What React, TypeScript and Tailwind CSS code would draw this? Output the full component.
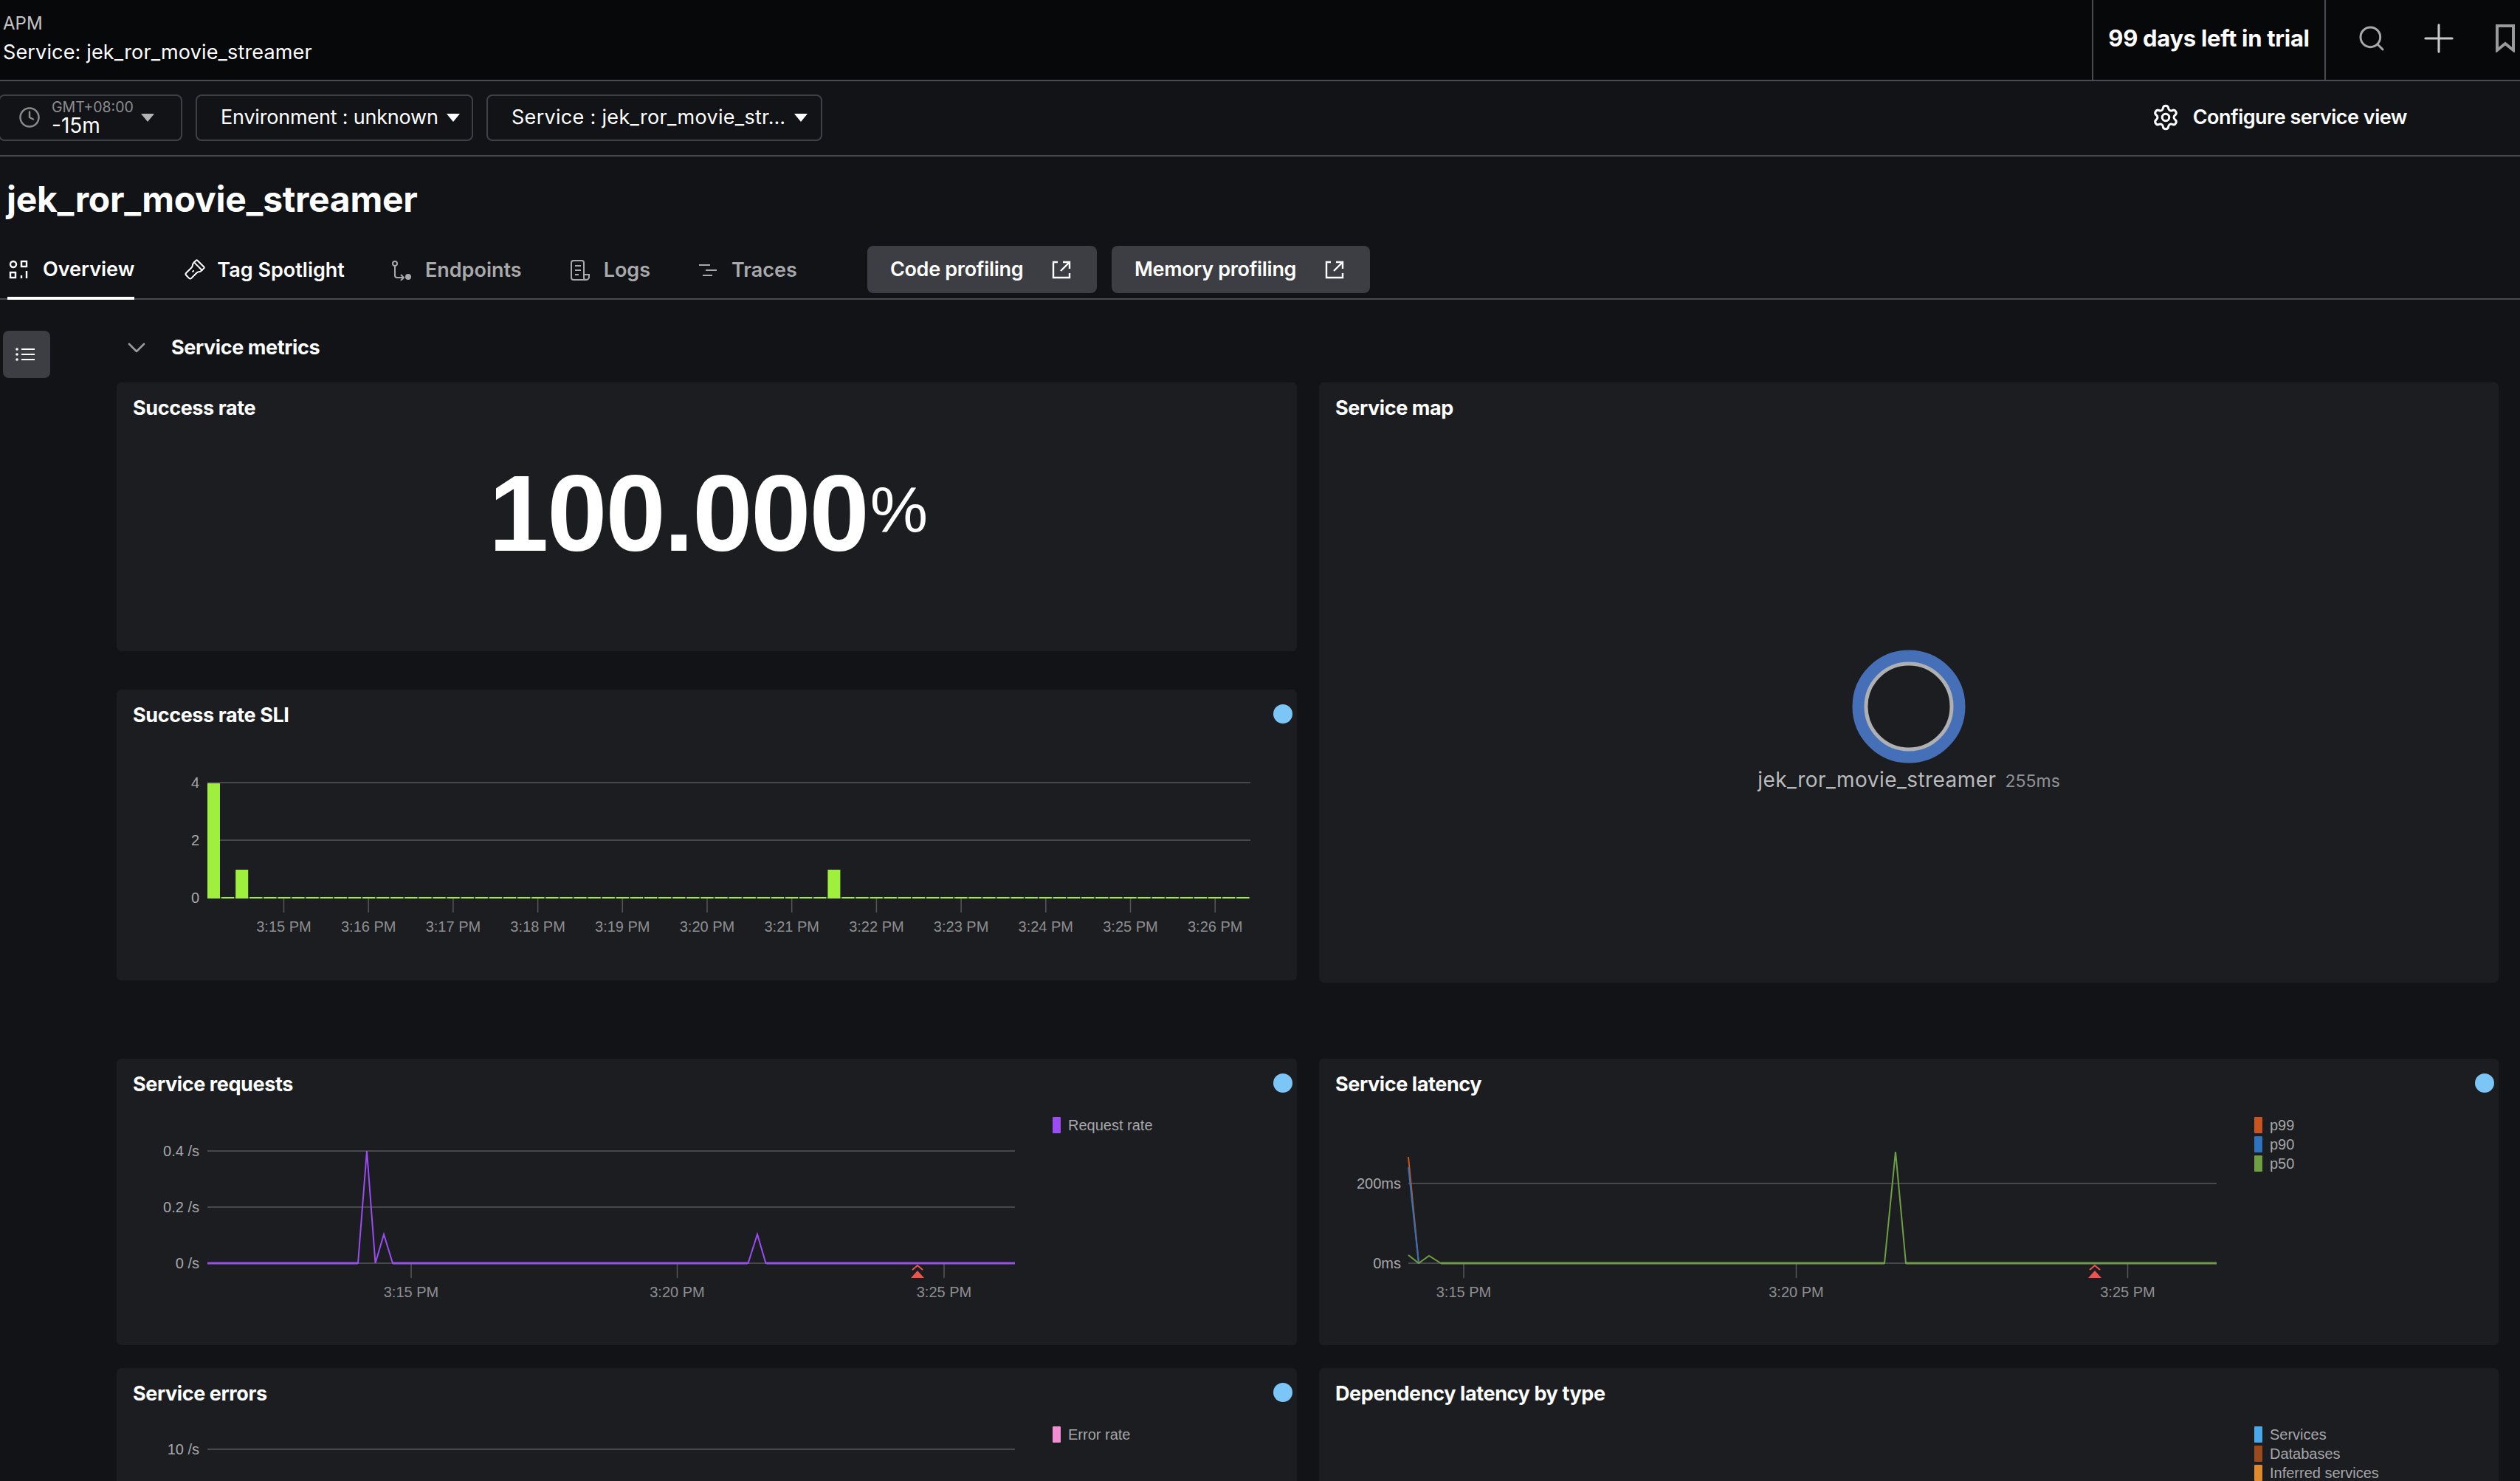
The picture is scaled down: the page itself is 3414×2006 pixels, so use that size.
import React from 'react';
import { ChevronDown, Clock, Flashlight, Plus, Search, Settings } from 'lucide-react';

const Caret = ({ color = '#ffffff' }: { color?: string }) => (
  <svg width="18" height="11" viewBox="0 0 18 11" className="shrink-0">
    <polygon points="0,0 18,0 9,11" fill={color} />
  </svg>
);

const OverviewIcon = () => (
  <svg width="26" height="26" viewBox="0 0 26 26" fill="none" stroke="#fff" strokeWidth="2.4">
    <circle cx="6" cy="6" r="4" />
    <rect x="17" y="2" width="7" height="7" />
    <rect x="2" y="17" width="7" height="7" />
    <path d="M17 21v4M24 15v10" />
  </svg>
);

const EndpointsIcon = () => (
  <svg width="28" height="28" viewBox="0 0 28 28" fill="none" stroke="#a9a9ab" strokeWidth="2">
    <circle cx="5" cy="5" r="3" />
    <path d="M5 8v13q0 3 3 3h8M13 20l4 4-4 4" />
    <circle cx="23" cy="23" r="4" fill="#a9a9ab" stroke="none" />
  </svg>
);

const LogsIcon = () => (
  <svg width="28" height="28" viewBox="0 0 28 28" fill="none" stroke="#a9a9ab" strokeWidth="2">
    <path d="M21 27H5q-3 0-3-3V4q0-3 3-3h11q3 0 3 3v20q0 3 3 3t4-3v-4h-7" />
    <path d="M7 8h8M7 14h8M7 20h5" />
  </svg>
);

const TracesIcon = () => (
  <svg width="26" height="24" viewBox="0 0 26 24" fill="none" stroke="#a9a9ab" strokeWidth="2">
    <path d="M1 5h15M10 12h15M6 19h13" />
  </svg>
);

const ExternalIcon = () => (
  <svg width="26" height="26" viewBox="0 0 26 26" fill="none" stroke="#fff" strokeWidth="2.4">
    <path d="M8 3H2v21h22v-6M12 15 23 4M15 3h9v9" />
  </svg>
);

const tabs = [
  { label: 'Overview', icon: <OverviewIcon />, active: true, ml: 'ml-[10px]', gap: 'gap-[20px]', pad: 'pl-[2px]' },
  { label: 'Tag Spotlight', icon: <Flashlight size={30} color="#fff" strokeWidth={1.6} className="rotate-45" />, white: true, ml: 'ml-[66px]', gap: 'gap-[16px]' },
  { label: 'Endpoints', icon: <EndpointsIcon />, ml: 'ml-[63px]', gap: 'gap-[18px]' },
  { label: 'Logs', icon: <LogsIcon />, ml: 'ml-[65px]', gap: 'gap-[18px]' },
  { label: 'Traces', icon: <TracesIcon />, ml: 'ml-[65px]', gap: 'gap-[19px]' },
];

const Card = ({ title, dot, className, children }: { title: string; dot?: boolean; className?: string; children?: React.ReactNode }) => (
  <div className={`rounded-md bg-[#1b1d21] ${className}`}>
    <div className="flex h-[70px] items-center justify-between pl-[22px] pr-[6px]">
      <h3 className="text-[27px] font-bold tracking-[-0.4px] text-white">{title}</h3>
      {dot && <span className="-mt-[5px] h-[26px] w-[26px] rounded-full bg-[#7cc5f7]" />}
    </div>
    {children}
  </div>
);

const Legend = ({ items, className }: { items: [string, string][]; className: string }) => (
  <div className={`flex flex-col gap-1 pt-[9px] ${className}`}>
    {items.map(([label, color]) => (
      <div key={label} className="flex h-[22px] items-center gap-[10px]">
        <span className="h-[22px] w-[11px] rounded-[1px]" style={{ backgroundColor: color }} />
        <span className="font-['Liberation_Sans',sans-serif] text-[20px] text-[#a6a6a8]">{label}</span>
      </div>
    ))}
  </div>
);

const Marker = ({ x, y }: { x: number; y: number }) => (
  <g>
    <path d={`M${x - 7} ${y - 11}l7-6 7 6`} fill="none" stroke="#ef5350" strokeWidth="2" />
    <polygon points={`${x},${y - 10} ${x + 9},${y} ${x - 9},${y}`} fill="#ef5350" />
  </g>
);

const chartText = { fontFamily: "'Liberation Sans', sans-serif", fontSize: 20 };

const GridLine = ({ x1, x2, y, label, lx }: { x1: number; x2: number; y: number; label: string; lx: number }) => (
  <g>
    <line x1={x1} x2={x2} y1={y} y2={y} stroke="#47484c" strokeWidth="2" />
    <text x={lx} y={y + 7} textAnchor="end" fill="#a8a8aa" style={chartText}>{label}</text>
  </g>
);

const Tick = ({ x, y, label }: { x: number; y: number; label: string }) => (
  <g>
    <line x1={x} x2={x} y1={y} y2={y + 20} stroke="#55565a" strokeWidth="1.5" />
    <text x={x} y={y + 46} textAnchor="middle" fill="#8e8e90" style={chartText}>{label}</text>
  </g>
);

const sliTicks = ['3:15 PM', '3:16 PM', '3:17 PM', '3:18 PM', '3:19 PM', '3:20 PM', '3:21 PM', '3:22 PM', '3:23 PM', '3:24 PM', '3:25 PM', '3:26 PM'];
const sliBars: Record<number, number> = { 0: 156, 2: 39, 44: 39 };

const SliChart = () => (
  <svg width="1599" height="320" className="block">
    <GridLine x1={123} x2={1536} y={56} label="4" lx={112} />
    <GridLine x1={123} x2={1536} y={134} label="2" lx={112} />
    <GridLine x1={123} x2={1536} y={212} label="0" lx={112} />
    {sliTicks.map((t, i) => (
      <Tick key={t} x={226.5 + i * 114.7} y={212} label={t} />
    ))}
    {Array.from({ length: 74 }).map((_, i) => {
      const h = sliBars[i] ?? 2;
      return <rect key={i} x={123 + i * 19.1} y={213 - h} width="17" height={h} fill="#9ff03c" />;
    })}
  </svg>
);

const RequestsChart = () => (
  <svg width="1240" height="300" className="block shrink-0">
    <g transform="translate(0,-1)">
      <GridLine x1={123} x2={1217} y={56} label="0.4 /s" lx={112} />
      <GridLine x1={123} x2={1217} y={132} label="0.2 /s" lx={112} />
      <GridLine x1={123} x2={1217} y={208} label="0 /s" lx={112} />
      <Tick x={399} y={208} label="3:15 PM" />
      <Tick x={759.5} y={208} label="3:20 PM" />
      <Tick x={1121} y={208} label="3:25 PM" />
      <polyline points="123,208 327,208 339,56 350.5,208 362,169 374,208 855.5,208 868,169 879.5,208 1217,208" fill="none" stroke="#9b4cf5" strokeWidth="2" />
      <path d="M123 208H327M374 208H855M880 208H1217" stroke="#9b4cf5" strokeWidth="3" />
      <Marker x={1085} y={228} />
    </g>
  </svg>
);

const LatencyChart = () => (
  <svg width="1240" height="300" className="block shrink-0">
    <g transform="translate(0,-1)">
      <GridLine x1={121} x2={1216} y={100} label="200ms" lx={111} />
      <GridLine x1={121} x2={1216} y={208} label="0ms" lx={111} />
      <Tick x={196} y={208} label="3:15 PM" />
      <Tick x={646.5} y={208} label="3:20 PM" />
      <Tick x={1095.5} y={208} label="3:25 PM" />
      <polyline points="121,64 135,208" fill="none" stroke="#c8541f" strokeWidth="2" />
      <polyline points="121,78 135,208" fill="none" stroke="#2f72bd" strokeWidth="2" />
      <polyline points="121,197 135,208 149,198 165,208 766,208 781,57 795,208 1216,208" fill="none" stroke="#6f9f43" strokeWidth="2" />
      <path d="M165 208H766M795 208H1216" stroke="#6f9f43" strokeWidth="3" />
      <Marker x={1051} y={228} />
    </g>
  </svg>
);

const ErrorsChart = () => (
  <svg width="1240" height="100" className="block shrink-0">
    <GridLine x1={123} x2={1217} y={40} label="10 /s" lx={112} />
  </svg>
);

export default function App() {
  return (
    <div className="flex h-[2006px] w-[3414px] flex-col overflow-hidden bg-[#111317] font-['Inter',sans-serif] text-white">
      {/* top bar */}
      <header className="flex h-[110px] shrink-0 items-stretch border-b-2 border-[#4a4b50] bg-[#07080a]">
        <div className="flex flex-1 flex-col pl-1 pt-[15px]">
          <span className="text-[24px] leading-[34px] text-[#c4c4c4]">APM</span>
          <span className="mt-[5px] text-[27px] leading-[34px] tracking-[0.15px]">Service: jek_ror_movie_streamer</span>
        </div>
        <div className="flex w-[317px] items-center justify-center border-x-2 border-[#4a4b50] pb-[4px] text-[31px] font-bold tracking-[-0.3px]">
          99 days left in trial
        </div>
        <div className="flex w-[263px] items-center pl-[42px] pb-[4px]">
          <Search size={40} color="#a8a8a8" strokeWidth={1.8} />
          <Plus size={62} color="#c8c8c8" strokeWidth={1.2} className="ml-[40px] shrink-0" />
          <svg width="26" height="38" viewBox="0 0 26 38" fill="none" stroke="#9a9a9a" strokeWidth="4" className="ml-[46px] shrink-0">
            <path d="M2 2h22v33l-11-9-11 9z" />
          </svg>
        </div>
      </header>

      {/* filters */}
      <div className="flex h-[102px] shrink-0 items-center border-b-2 border-[#4a4b50] pb-[2px]">
        <div className="-ml-0.5 flex h-[63px] w-[249px] items-center rounded-lg border-2 border-[#3f4147] pl-[25px]">
          <Clock size={30} color="#8a8a8a" strokeWidth={2} />
          <div className="ml-[15px] flex flex-col">
            <span className="text-[19.5px] leading-[22px] text-[#8d8d8f]">GMT+08:00</span>
            <span className="text-[28px] leading-[28px]">-15m</span>
          </div>
          <span className="ml-[10px]"><Caret color="#b4b4b4" /></span>
        </div>
        <div className="ml-[18px] flex h-[63px] w-[376px] items-center gap-[11px] rounded-lg border-2 border-[#3f4147] pl-[32px]">
          <span className="text-[27px] tracking-[-0.2px]">Environment : unknown</span>
          <Caret />
        </div>
        <div className="ml-[18px] flex h-[63px] w-[455px] items-center gap-[11px] rounded-lg border-2 border-[#3f4147] pl-[32px]">
          <span className="text-[27px] tracking-[0.3px]">Service : jek_ror_movie_str…</span>
          <Caret />
        </div>
        <div className="ml-auto mr-[153px] flex items-center gap-[18px]">
          <Settings size={38} color="#fff" strokeWidth={1.9} />
          <span className="text-[27px] font-semibold tracking-[-0.5px]">Configure service view</span>
        </div>
      </div>

      {/* title and tabs */}
      <h1 className="flex h-[121px] shrink-0 items-center pb-[5px] pl-[9px] text-[48px] font-bold tracking-[-0.3px]">jek_ror_movie_streamer</h1>
      <nav className="flex h-[73px] shrink-0 items-stretch border-b-2 border-[#4a4b50]">
        {tabs.map((t) => (
          <div
            key={t.label}
            className={`flex items-center pb-[5px] ${t.gap} ${t.ml} ${t.pad ?? ''} text-[27px] ${
              t.active ? '-mb-0.5 border-b-[4px] border-white pb-[3px] font-semibold' : t.white ? 'font-semibold' : 'font-semibold text-[#a9a9ab]'
            }`}
          >
            {t.icon}
            <span>{t.label}</span>
          </div>
        ))}
        <div className="ml-[95px] flex h-[64px] w-[311px] items-center justify-between rounded-lg bg-[#3d3e43] pl-[31px] pr-[35px] text-[27px] font-semibold tracking-[-0.3px]">
          Code profiling <ExternalIcon />
        </div>
        <div className="ml-[20px] flex h-[64px] w-[350px] items-center justify-between rounded-lg bg-[#3d3e43] pl-[31px] pr-[35px] text-[27px] font-semibold tracking-[-0.3px]">
          Memory profiling <ExternalIcon />
        </div>
      </nav>

      {/* body */}
      <div className="flex flex-1">
        <aside className="w-[158px] shrink-0 pl-1 pt-[42px]">
          <div className="flex h-[64px] w-[64px] items-center justify-center rounded-lg bg-[#3d3e43]">
            <svg width="26" height="18" viewBox="0 0 26 18" fill="none" stroke="#fff" strokeWidth="1.8" className="-ml-1">
              <path d="M8 2h18M8 9h18M8 16h18" />
              <circle cx="2" cy="2" r="1.8" fill="#fff" stroke="none" />
              <circle cx="2" cy="9" r="1.8" fill="#fff" stroke="none" />
              <circle cx="2" cy="16" r="1.8" fill="#fff" stroke="none" />
            </svg>
          </div>
        </aside>
        <main className="w-[3227px] shrink-0">
          <div className="flex h-[112px] items-center pl-[7px] pt-[18px]">
            <ChevronDown size={40} color="#9a9a9a" strokeWidth={1.6} />
            <span className="ml-[27px] text-[27px] font-bold tracking-[-0.4px]">Service metrics</span>
          </div>
          <div className="grid grid-cols-[1599px_1598px] gap-x-[30px]">
            <div className="flex flex-col gap-[52px]">
              <Card title="Success rate" className="h-[364px]">
                <div className="pl-[4px] pt-[35px] text-center font-['Liberation_Sans',sans-serif] leading-none">
                  <span className="text-[146px] font-bold leading-none tracking-[-2px]">100.000</span>
                  <span className="ml-[3px] align-[26px] text-[88px] leading-none">%</span>
                </div>
              </Card>
              <Card title="Success rate SLI" dot className="h-[394px]">
                <SliChart />
              </Card>
            </div>
            <Card title="Service map" className="h-[813px]">
              <div className="flex flex-col items-center pt-[292px]">
                <svg width="154" height="154" viewBox="0 0 154 154">
                  <circle cx="77" cy="77" r="68" fill="none" stroke="#4570b8" strokeWidth="17" />
                  <circle cx="77" cy="77" r="58" fill="#1b1d21" stroke="#b0b0b2" strokeWidth="5" />
                </svg>
                <div className="mt-px flex items-baseline gap-[12px]">
                  <span className="text-[28px] tracking-[0.45px] text-[#b9babc]">jek_ror_movie_streamer</span>
                  <span className="text-[23px] text-[#8f9194]">255ms</span>
                </div>
              </div>
            </Card>
          </div>
          <div className="mt-[103px] grid grid-cols-[1599px_1598px] gap-x-[30px] gap-y-[31px]">
            <Card title="Service requests" dot className="h-[388px]">
              <div className="flex">
                <RequestsChart />
                <Legend className="ml-[28px]" items={[['Request rate', '#9b4cf5']]} />
              </div>
            </Card>
            <Card title="Service latency" dot className="h-[388px]">
              <div className="flex">
                <LatencyChart />
                <Legend className="ml-[27px]" items={[['p99', '#c8541f'], ['p90', '#2f72bd'], ['p50', '#6f9f43']]} />
              </div>
            </Card>
            <Card title="Service errors" dot className="h-[388px]">
              <div className="flex">
                <ErrorsChart />
                <Legend className="ml-[28px]" items={[['Error rate', '#f28fd0']]} />
              </div>
            </Card>
            <Card title="Dependency latency by type" className="h-[388px]">
              <div className="flex">
                <div className="h-[100px] w-[1240px] shrink-0" />
                <Legend className="ml-[27px]" items={[['Services', '#4aa8ea'], ['Databases', '#9a4a1c'], ['Inferred services', '#e08a2b']]} />
              </div>
            </Card>
          </div>
        </main>
      </div>
    </div>
  );
}
